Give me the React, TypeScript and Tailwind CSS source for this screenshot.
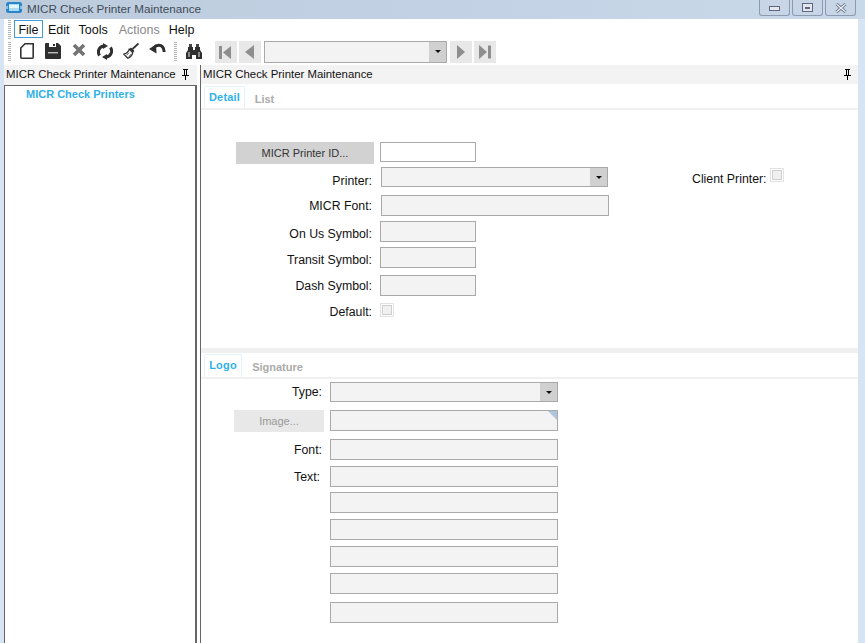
function Grip() {
  return (
    <div className="flex flex-col gap-[1px] w-[3px] h-[20px] overflow-hidden">
      {Array.from({ length: 10 }).map((_, i) => (
        <div key={i} className="w-[3px] h-[1px] bg-[#b4b4b4]" />
      ))}
    </div>
  );
}

function Pin() {
  return (
    <svg width="9" height="11" viewBox="0 0 9 11" className="shrink-0">
      <path d="M2 0h5v1H6v5h2v1H5v4H4V7H1V6h2V1H2z M4 1v5h1V1z" fill="#000" fillRule="evenodd" />
      <rect x="5" y="1" width="1" height="5" fill="#000" />
    </svg>
  );
}

function Caret() {
  return (
    <svg width="6" height="3" viewBox="0 0 6 3">
      <path d="M0 0h6L3 3z" fill="#111" />
    </svg>
  );
}

function Combo({ w, h = "h-[20px]" }: { w: string; h?: string }) {
  return (
    <div className={`${w} ${h} border border-[#a9a9a9] bg-[#f3f3f3] flex justify-end`}>
      <div className="w-[17px] bg-[#d0d0d0] flex items-center justify-center">
        <Caret />
      </div>
    </div>
  );
}

function NavButton({ d }: { d: string }) {
  return (
    <div className="w-[22px] h-[22px] bg-[#e8e8e8]">
      <svg width="22" height="22" viewBox="0 0 22 22">
        <path d={d} fill="#8e8e8e" />
      </svg>
    </div>
  );
}

function Check() {
  return (
    <div className="w-[14px] h-[14px] border border-[#e2e2e2] p-[1px]">
      <div className="w-full h-full bg-[#f0f0f0] border border-[#cfcfcf]" />
    </div>
  );
}

function Tab({ label, active, w }: { label: string; active?: boolean; w: string }) {
  return (
    <div
      className={`${w} h-full flex justify-center font-bold text-[11px] ${
        active
          ? "border border-b-0 border-[#e4f2fb] rounded-t-[2px] text-[#2fb0e8] pt-[3px] tracking-[0.2px]"
          : "text-[#ababab] pt-[6px]"
      }`}
    >
      {label}
    </div>
  );
}

const box = "border border-[#a9a9a9] bg-[#f3f3f3] h-[21px]";

export default function App() {
  return (
    <div className="w-[865px] h-[643px] overflow-hidden flex flex-col bg-[#d6e4f3] text-[12.3px] leading-[14px] text-[#111] font-['Liberation_Sans',Arial,sans-serif]">
      {/* Title bar */}
      <div className="h-[19px] shrink-0 flex items-start bg-gradient-to-r from-[#bccbdc] via-[#c2d2e4] to-[#c9d9ea]">
        <svg width="16" height="11" viewBox="0 0 16 11" className="ml-[6px] mt-[2px]">
          <rect x="0" y="0" width="16" height="11" rx="2.5" fill="#2a86c8" />
          <rect x="3" y="2" width="10" height="7" fill="#a9dbf3" />
          <rect x="3" y="3" width="10" height="3" fill="#e2f4fc" />
          <rect x="0" y="4" width="2" height="3" fill="#7fc1e8" />
          <rect x="14" y="4" width="2" height="3" fill="#7fc1e8" />
        </svg>
        <span className="ml-[5px] mt-[2px] text-[11.7px] whitespace-nowrap text-[#3e4a58]">MICR Check Printer Maintenance</span>
        <div className="ml-auto mr-[9px] flex gap-[2px]">
          <div className="w-[31px] h-[16px] border border-t-0 border-[#8c9bb1] rounded-b-[3px] bg-[#c7d5e6] flex items-center justify-center">
            <div className="w-[11px] h-[5px] border border-[#5d6880] bg-[#e4e8ee] mt-[2px]" />
          </div>
          <div className="w-[31px] h-[16px] border border-t-0 border-[#8c9bb1] rounded-b-[3px] bg-[#c7d5e6] flex items-center justify-center">
            <div className="w-[11px] h-[9px] border border-[#5d6880] bg-[#e4e8ee] flex items-center justify-center">
              <div className="w-[5px] h-[2px] bg-[#5d6880]" />
            </div>
          </div>
          <div className="w-[31px] h-[16px] border border-t-0 border-[#8c9bb1] rounded-b-[3px] bg-[#c7d5e6] flex items-center justify-center">
            <svg width="12" height="10" viewBox="0 0 12 10">
              <path d="M1.5 1l9 8M10.5 1l-9 8" stroke="#5d6880" strokeWidth="3" />
              <path d="M1.5 1l9 8M10.5 1l-9 8" stroke="#eef1f5" strokeWidth="1.4" />
            </svg>
          </div>
        </div>
      </div>

      {/* Window body */}
      <div className="ml-[4px] w-[854px] flex-1 min-h-0 bg-white flex flex-col">
        {/* Menu */}
        <div className="h-[21px] shrink-0 flex items-start pl-[4px] pt-[1px] text-[12.5px]">
          <div className="h-[19px] flex items-center"><Grip /></div>
          <div className="ml-[3px] w-[29px] h-[18px] border border-[#3d9be0] flex items-center justify-center pt-[1px]">File</div>
          <div className="ml-[5px] h-[18px] flex items-center pt-[1px]">Edit</div>
          <div className="ml-[9px] h-[18px] flex items-center pt-[1px]">Tools</div>
          <div className="ml-[11px] h-[18px] flex items-center pt-[1px] text-[#8a8a8a]">Actions</div>
          <div className="ml-[9px] h-[18px] flex items-center pt-[1px]">Help</div>
        </div>

        {/* Toolbar */}
        <div className="h-[25px] shrink-0 flex items-center pl-[4px] pb-[2px]">
          <Grip />
          <div className="ml-[3px] flex">
            <div className="w-[26px] flex justify-center">
              <svg width="14" height="16" viewBox="0 0 14 16">
                <path d="M5 .8h8.2v13.4a1 1 0 0 1-1 1H1.8a1 1 0 0 1-1-1V5z" fill="#fff" stroke="#333" strokeWidth="1.6" />
              </svg>
            </div>
            <div className="w-[26px] flex justify-center">
              <svg width="16" height="16" viewBox="0 0 16 16">
                <path d="M1 0h12l3 3v12a1 1 0 0 1-1 1H1a1 1 0 0 1-1-1V1a1 1 0 0 1 1-1z" fill="#2f2f2f" />
                <rect x="4" y="0" width="7" height="4" fill="#fff" />
                <rect x="8" y="1" width="2" height="2" fill="#2f2f2f" />
                <rect x="3" y="9" width="10" height="1.4" fill="#bdbdbd" />
              </svg>
            </div>
            <div className="w-[26px] flex justify-center">
              <svg width="14" height="14" viewBox="0 0 14 14">
                <path d="M2 2l10 10M12 2L2 12" stroke="#747474" strokeWidth="3.6" />
              </svg>
            </div>
            <div className="w-[26px] flex justify-center">
              <svg width="16" height="17" viewBox="0 0 16 17" fill="none">
                <path d="M2.6 12.5A6 6 0 0 1 6.5 3" stroke="#2f2f2f" strokeWidth="3" />
                <path d="M13.4 4.5A6 6 0 0 1 9.5 14" stroke="#2f2f2f" strokeWidth="3" />
                <path d="M6 0l5 3-5 3z M10 11l-5 3 5 3z" fill="#2f2f2f" />
              </svg>
            </div>
            <div className="w-[26px] flex justify-center">
              <svg width="16" height="16" viewBox="0 0 16 16" fill="none">
                <path d="M15.500 .5l-6 5.5" stroke="#2f2f2f" strokeWidth="1.8" />
                <path d="M8 4.500l3.5 3.500-1.600 1.600L6.400 6z" fill="#2f2f2f" />
                <path d="M6.200 6.200l3.600 3.600c-.8 2.600-2.600 4.600-5 5.400L.8 11.200C3 10.600 5.200 8.800 6.200 6.200z" fill="#fff" stroke="#2f2f2f" strokeWidth="1.2" />
                <path d="M3.600 12.200l2.400-2.600M6 13.600l2-2.400" stroke="#2f2f2f" strokeWidth=".9" />
              </svg>
            </div>
            <div className="w-[26px] flex justify-center">
              <svg width="17" height="12" viewBox="0 0 17 12" fill="none">
                <path d="M4.500 5c1.500-1.600 3.200-2.800 5.200-2.800 3.200 0 5.200 2.600 5.500 6.800" stroke="#2f2f2f" strokeWidth="3" />
                <path d="M0 6l7-4.500.5 9z" fill="#2f2f2f" />
              </svg>
            </div>
          </div>
          <div className="ml-[4px]"><Grip /></div>
          <svg width="16" height="15" viewBox="0 0 16 15" className="ml-[9px]">
            <path d="M3 0h3v3H3z M10 0h3v3h-3z" fill="#444" />
            <path d="M2 3h5v3h2V3h5v3l2 3v6H10v-4H6v4H0V9l2-3z" fill="#2f2f2f" />
            <rect x="2" y="8" width="2" height="5" fill="#8a8a8a" />
            <rect x="12" y="8" width="2" height="5" fill="#8a8a8a" />
          </svg>
          <div className="ml-[13px] flex gap-[2px] items-center">
            <NavButton d="M4 5h3v13H4z M16 5v13L8 11.500z" />
            <NavButton d="M15 4v14L6 11z" />
            <div className="mx-[1px]"><Combo w="w-[183px]" h="h-[22px]" /></div>
            <NavButton d="M7 4v14l8-7z" />
            <NavButton d="M5 4v14l8-7z M14 4.500h3v13h-3z" />
          </div>
        </div>

        {/* Panels */}
        <div className="flex-1 min-h-0 flex">
          {/* Left panel */}
          <div className="w-[193px] shrink-0 flex flex-col">
            <div className="h-[20px] shrink-0 bg-[#f3f3f3] flex items-center pl-[2px] pr-[7px] pb-[2px] justify-between text-[11.4px] whitespace-nowrap">
              <span>MICR Check Printer Maintenance</span>
              <Pin />
            </div>
            <div className="flex-1 border-l border-t border-[#666] border-r-2 pl-[21px] pt-[1px] font-bold text-[11px] text-[#2fb0e8]">
              MICR Check Printers
            </div>
          </div>

          {/* Right panel */}
          <div className="ml-[3px] flex-1 border-l border-[#666] flex flex-col">
            <div className="h-[19px] shrink-0 bg-[#f3f3f3] flex items-center pl-[2px] pr-[6px] pb-[1px] justify-between text-[11.4px] whitespace-nowrap">
              <span>MICR Check Printer Maintenance</span>
              <Pin />
            </div>
            <div className="h-[26px] shrink-0 pl-[3px] pt-[2px] flex border-b-2 border-[#f0f0f0]">
              <Tab label="Detail" active w="w-[41px]" />
              <Tab label="List" w="w-[39px]" />
            </div>

            {/* Detail form */}
            <div className="h-[238px] shrink-0 pt-[32px]">
              <div className="flex">
                <div className="ml-[35px] w-[138px] h-[22px] bg-[#d2d2d2] flex items-center justify-center text-[11px] text-[#333]">MICR Printer ID...</div>
                <div className="ml-[6px] w-[96px] h-[20px] border border-[#a9a9a9] bg-white" />
              </div>
              <div className="flex h-[20px] mt-[3px]">
                <div className="w-[171px] pt-[7px] text-right">Printer:</div>
                <div className="ml-[9px]"><Combo w="w-[227px]" /></div>
                <div className="ml-[84px] pt-[5px]">Client Printer:</div>
                <div className="ml-[3px] mt-[1px]"><Check /></div>
              </div>
              <div className="flex mt-[8px]">
                <div className="w-[171px] pt-[4px] text-right">MICR Font:</div>
                <div className={`ml-[9px] w-[228px] ${box}`} />
              </div>
              <div className="flex mt-[5px]">
                <div className="w-[171px] pt-[6px] text-right">On Us Symbol:</div>
                <div className={`ml-[8px] w-[96px] ${box}`} />
              </div>
              <div className="flex mt-[5px]">
                <div className="w-[171px] pt-[6px] text-right">Transit Symbol:</div>
                <div className={`ml-[8px] w-[96px] ${box}`} />
              </div>
              <div className="flex mt-[7px]">
                <div className="w-[171px] pt-[4px] text-right">Dash Symbol:</div>
                <div className={`ml-[8px] w-[96px] ${box}`} />
              </div>
              <div className="flex mt-[7px]">
                <div className="w-[171px] pt-[2px] text-right">Default:</div>
                <div className="ml-[8px]"><Check /></div>
              </div>
            </div>

            <div className="h-[5px] shrink-0 bg-[#f0f0f0]" />

            <div className="h-[26px] shrink-0 pl-[3px] pt-[1px] flex border-b-2 border-[#f0f0f0]">
              <Tab label="Logo" active w="w-[38px]" />
              <Tab label="Signature" w="w-[71px]" />
            </div>

            {/* Logo form */}
            <div className="pt-[3px]">
              <div className="flex">
                <div className="w-[121px] pt-[3px] text-right">Type:</div>
                <div className="ml-[8px]"><Combo w="w-[228px]" /></div>
              </div>
              <div className="flex mt-[8px]">
                <div className="ml-[33px] w-[90px] h-[22px] bg-[#e8e8e8] flex items-center justify-center text-[11px] text-[#999]">Image...</div>
                <div className={`relative ml-[6px] w-[228px] ${box}`}>
                  <div className="absolute top-0 right-0 w-0 h-0 border-t-[9px] border-l-[9px] border-t-[#b0c4de] border-l-transparent" />
                </div>
              </div>
              <div className="flex mt-[7px]">
                <div className="w-[121px] pt-[4px] text-right">Font:</div>
                <div className={`ml-[8px] w-[228px] ${box}`} />
              </div>
              <div className="flex mt-[6px]">
                <div className="w-[119px] pt-[4px] text-right">Text:</div>
                <div className={`ml-[10px] w-[228px] ${box}`} />
              </div>
              <div className={`ml-[129px] mt-[5px] w-[228px] ${box}`} />
              <div className={`ml-[129px] mt-[6px] w-[228px] ${box}`} />
              <div className={`ml-[129px] mt-[6px] w-[228px] ${box}`} />
              <div className={`ml-[129px] mt-[6px] w-[228px] ${box}`} />
              <div className={`ml-[129px] mt-[8px] w-[228px] ${box}`} />
            </div>
          </div>
        </div>
      </div>
    </div>
  );
}
